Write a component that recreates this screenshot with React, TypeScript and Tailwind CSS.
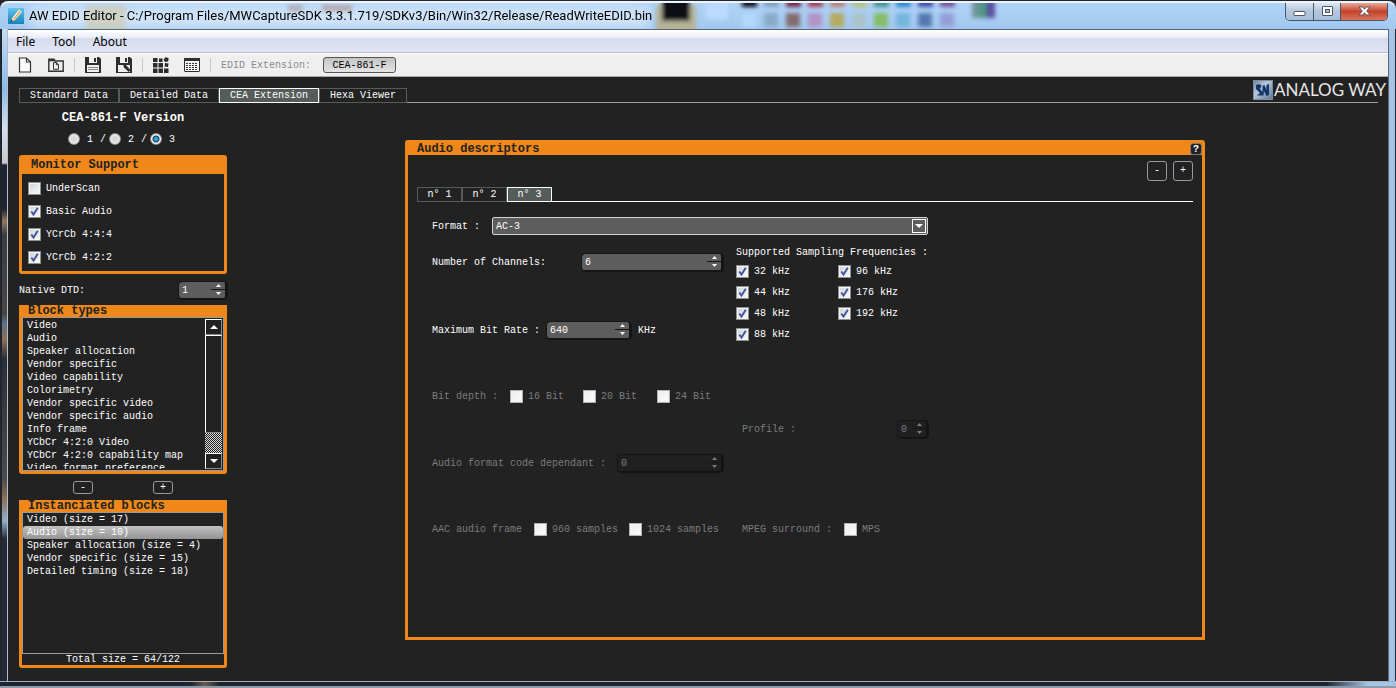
import React, { useState } from "react";

const blockTypes = [
  "Video",
  "Audio",
  "Speaker allocation",
  "Vendor specific",
  "Video capability",
  "Colorimetry",
  "Vendor specific video",
  "Vendor specific audio",
  "Info frame",
  "YCbCr 4:2:0 Video",
  "YCbCr 4:2:0 capability map",
  "Video format preference",
];

const blocks = [
  "Video (size = 17)",
  "Audio (size = 10)",
  "Speaker allocation (size = 4)",
  "Vendor specific (size = 15)",
  "Detailed timing (size = 18)",
];

// Colours of the palette that shines through the glass title bar
const swatches = [
  ["#0b0f1c", "#b4d8fc"],
  ["#7f9fbd", "#8aa9c8"],
  ["#722544", "#836c6e"],
  ["#a63a52", "#b393c4"],
  ["#b98276", "#b5a95c"],
  ["#b5c274", "#a9c3c9"],
  ["#3f9388", "#84bb66"],
  ["#2f88cc", "#74b4de"],
  ["#4048a4", "#5379ae"],
  ["#75509b", "#929fd6"],
];

const TitleBackdrop = () => (
  <svg className="absolute inset-0 h-full w-full" aria-hidden="true">
    <defs>
      <filter id="soft" x="-20%" y="-20%" width="140%" height="140%">
        <feGaussianBlur stdDeviation="2" />
      </filter>
      <filter id="softer" x="-20%" y="-60%" width="140%" height="220%">
        <feGaussianBlur stdDeviation="7" />
      </filter>
    </defs>
    <rect x="30" y="4" width="620" height="21" fill="#e4eefa" opacity="0.75" filter="url(#softer)" />
    <g filter="url(#soft)">
      <rect x="86" y="2" width="40" height="26" fill="#cfc6a8" opacity="0.6" />
      <rect x="288" y="2" width="14" height="6" fill="#9c7a72" opacity="0.5" />
      <rect x="322" y="2" width="30" height="6" fill="#a88478" opacity="0.6" />
      <rect x="656" y="2" width="40" height="28" fill="#b5b297" />
      <rect x="662" y="-4" width="28" height="22" fill="#080b14" />
      <rect x="706" y="0" width="22" height="16" fill="#bcdcff" />
      <rect x="972" y="-4" width="8" height="19" fill="#6f9399" />
      <rect x="979" y="-4" width="8" height="19" fill="#4f9a84" />
      <rect x="986" y="-4" width="9" height="19" fill="#5a4f9f" />
    </g>
    <g filter="url(#soft)">
      {swatches.map(([top, bottom], i) => (
        <g key={top}>
          <rect x={742 + i * 22} y="-6" width="15" height="10" fill={top} />
          <rect x={742 + i * 22} y="10" width="14" height="14" fill={bottom} />
        </g>
      ))}
    </g>
  </svg>
);

const TitleBar = () => (
  <header className="relative flex h-7 items-center justify-between overflow-hidden rounded-t-lg border-t-2 border-white/80 bg-gradient-to-b from-[#b0d3f8] to-[#a2c8ef]">
    <TitleBackdrop />
    <div className="relative flex items-center gap-[5px] pl-2">
      <svg width="16" height="16" viewBox="0 0 16 16" aria-hidden="true">
        <defs>
          <linearGradient id="app" x1="0" y1="0" x2="0" y2="1">
            <stop offset="0" stopColor="#5fc4ee" />
            <stop offset="1" stopColor="#1583b8" />
          </linearGradient>
        </defs>
        <rect width="16" height="16" fill="url(#app)" />
        <path d="M3 14l1.2-4L11 1.5l3 2.2L7 12z" fill="#fdf3dc" />
        <path d="M5.5 11.5L12.5 3" stroke="#e7a04c" strokeWidth="1.2" />
        <path d="M2.5 14.5l1-3 1.8 1.5z" fill="#4a3a2c" />
      </svg>
      <h1 className="whitespace-nowrap font-['Roboto','Noto_Sans',sans-serif] text-[13px] leading-4 text-black">
        AW EDID Editor - C:/Program Files/MWCaptureSDK 3.3.1.719/SDKv3/Bin/Win32/Release/ReadWriteEDID.bin
      </h1>
    </div>
    <div className="relative mr-2 flex h-[18px] self-start overflow-hidden rounded-b-[5px] border border-t-0 border-[#47546b]">
      <button aria-label="Minimize" className="flex w-7 items-center justify-center border-r border-[#47546b] bg-gradient-to-b from-[#dbe6f2] via-[#b3c5da] via-50% to-[#a7bfdc]">
        <svg width="13" height="16" viewBox="0 1 13 16">
          <rect x="1" y="8.5" width="11" height="4" rx="0.5" fill="#fff" stroke="#4f5566" />
        </svg>
      </button>
      <button aria-label="Maximize" className="flex w-[27px] items-center justify-center border-r border-[#47546b] bg-gradient-to-b from-[#dbe6f2] via-[#b3c5da] via-50% to-[#a7bfdc]">
        <svg width="13" height="16" viewBox="0 1 13 16">
          <rect x="1.5" y="3.5" width="10" height="9" rx="0.5" fill="#fff" stroke="#4f5566" />
          <rect x="4.5" y="6.5" width="4" height="3" fill="#a9bdd6" stroke="#4f5566" />
        </svg>
      </button>
      <button aria-label="Close" className="flex w-[46px] items-center justify-center bg-gradient-to-b from-[#e6a898] via-[#c4402a] via-50% to-[#d9775a]">
        <svg width="13" height="16" viewBox="0 1 13 16">
          <path d="M1 4h3.6l1.900 2.200L8.400 4H12L8.700 8l3.300 4H8.400L6.500 9.800 4.600 12H1l3.300-4z" fill="#fff" stroke="#5a4a58" strokeWidth="0.9" />
        </svg>
      </button>
    </div>
  </header>
);

const MenuBar = () => (
  <nav className="flex h-6 items-center gap-[17px] border-t border-b border-t-[#56657a] border-b-[#b6bccc] bg-[linear-gradient(#ffffff,#e8eef6_35%,#d5daee_36%,#e1e5f5)] pt-px pl-2 font-['Noto_Sans','Liberation_Sans',sans-serif] text-[12px] text-black">
    <button>File</button>
    <button>Tool</button>
    <button>About</button>
  </nav>
);

const Separator = () => <span className="mx-[10px] h-[14px] w-px bg-[#c8c8c8]" />;

const ToolBar = () => (
  <div className="flex h-6 items-center border-t border-b border-t-white border-b-[#a8a8a8] bg-[#efefef] pl-[10px]">
    <button aria-label="New" className="mr-[14px]">
      <svg width="16" height="16" viewBox="0 0 16 16" fill="none" stroke="#333" strokeWidth="1.2">
        <path d="M1.500 1H8.500l4 4v10h-11z" fill="#fafafa" />
        <path d="M8.500 1v4h4" />
      </svg>
    </button>
    <button aria-label="Open">
      <svg width="16" height="16" viewBox="0 0 16 16" fill="none" stroke="#333" strokeWidth="1.4">
        <path d="M0.800 14.300V2.200H6l1.200 1.800h8v10.300z" />
        <path d="M0.800 3.600h6" />
        <path d="M5.500 5.500h3l2 2v4.800h-5zM8.300 5.500v2.200h2.200" strokeWidth="1" />
      </svg>
    </button>
    <Separator />
    <button aria-label="Save" className="mr-[15px]">
      <svg width="16" height="16" viewBox="0 0 16 16">
        <path d="M0 0h14l2 2v14H0z" fill="#2e2e2e" />
        <path d="M4 0h8v6H4z" fill="#efefef" />
        <path d="M9 1h2v4H9z" fill="#2e2e2e" />
        <path d="M2 8h12v7H2z" fill="#efefef" />
        <path d="M3 10.500h10M3 12.500h10" stroke="#8a8a8a" />
      </svg>
    </button>
    <button aria-label="Save as">
      <svg width="16" height="16" viewBox="0 0 16 16">
        <path d="M0 0h14l2 2v14H0z" fill="#2e2e2e" />
        <path d="M4 0h8v6H4z" fill="#efefef" />
        <path d="M9 1h2v4H9z" fill="#2e2e2e" />
        <path d="M2 8h12v7H2z" fill="#efefef" />
        <path d="M7 7.500l3 .5 4.500 5-1.800 2L8 10.500z" fill="#2e2e2e" />
      </svg>
    </button>
    <Separator />
    <button aria-label="Blocks" className="mr-[15px]">
      <svg width="16" height="16" viewBox="0 0 16 16" fill="#2b2b2b">
        <path d="M0 1h4.500v4H0zM6 1.500h3.500V5H6zM0 6h4.500v4.500H0zM5.500 6H10v4.500H5.500zM0 11.500h4.500V16H0zM5.500 11.500H10V16H5.500zM11 11.500h4.500V16H11z" />
        <path d="M13 0l2.800 1.500-.8 3-3 .5L10.500 2.500zM12 6l3.500.5-.5 3.500-3.500-.5z" />
      </svg>
    </button>
    <button aria-label="Table">
      <svg width="16" height="16" viewBox="0 0 16 16">
        <rect x="0.5" y="1.5" width="15" height="13" rx="0.5" fill="#fafafa" stroke="#2e2e2e" />
        <path d="M0 1h16v3H0z" fill="#2e2e2e" />
        <path d="M2 6.500h12M2 8.500h12M2 10.500h12M2 12.500h12" stroke="#333" strokeDasharray="2 1" />
      </svg>
    </button>
    <Separator />
    <span className="mr-3 text-[#8a8a8a]">EDID Extension:</span>
    <button className="h-4 w-[73px] rounded-[3px] border border-[#555] bg-gradient-to-b from-[#c4c4c4] to-[#e4e4e4] leading-4 text-black">
      CEA-861-F
    </button>
  </div>
);

const Logo = () => (
  <div className="-mr-2 flex h-[23px] items-center gap-px">
    <svg width="20" height="20" viewBox="0 0 20 20" aria-hidden="true">
      <defs>
        <linearGradient id="steel" x1="0" y1="0" x2="1" y2="1">
          <stop offset="0" stopColor="#6d8199" />
          <stop offset="0.4" stopColor="#b6c8dc" />
          <stop offset="1" stopColor="#5d7590" />
        </linearGradient>
      </defs>
      <rect x="0.5" y="0.5" width="19" height="19" fill="url(#steel)" stroke="#7d8c9c" />
      <path d="M3 5c2.500-1.500 5-1 5.500 1L7 9l2.500 3V6l2-1 2 5V5L16 4v11l-2.500 1-2.500-5-.5 4.500L4 15.500 7 13 3 9z" fill="#15366a" />
    </svg>
    <span className="whitespace-nowrap font-['Lato','Liberation_Sans',sans-serif] text-[17px] leading-5 text-[#e6e6e6]">ANALOG WAY</span>
  </div>
);

const Check = ({ label, checked = false, disabled = false, className = "" }: { label: string; checked?: boolean; disabled?: boolean; className?: string }) => (
  <label className={"flex items-center gap-[5px] whitespace-nowrap " + (disabled ? "text-[#7c7c7c] " : "") + className}>
    <span className="grid shrink-0">
      <input
        type="checkbox"
        defaultChecked={checked}
        disabled={disabled}
        className="peer h-[13px] w-[13px] appearance-none border border-[#8e8f8f] bg-gradient-to-br from-[#cfd3da] to-[#fbfbfb] shadow-[inset_0_0_0_1px_#f4f4f4] [grid-area:1/1] disabled:border-[#b1b1b1] disabled:from-[#ececec] disabled:to-[#fcfcfc]"
      />
      <svg width="13" height="13" viewBox="0 0 13 13" className="pointer-events-none hidden [grid-area:1/1] peer-checked:block">
        <path d="M3.300 6.500l2.200 3L9.800 2.800" fill="none" stroke="#3f549b" strokeWidth="1.9" />
      </svg>
    </span>
    {label}
  </label>
);

const Spin = ({ id, value, disabled = false, className }: { id: string; value: string; disabled?: boolean; className: string }) => (
  <span className={"flex h-[17px] shrink-0 rounded-[3px] border-r-2 border-b border-[#131313] outline outline-[#151515] " + (disabled ? "bg-[#202020] text-[#7c7c7c] " : "bg-[#5d5d5d] text-white ") + className}>
    <input id={id} defaultValue={value} disabled={disabled} className="min-w-0 flex-1 bg-transparent pt-[2px] pl-[3px] outline-none" />
    <span className="flex w-[14px] shrink-0 flex-col">
      <button aria-label="Increase" disabled={disabled} className="flex h-2 items-center justify-center border-b border-[#161616] pt-px">
        <svg width="5" height="3" viewBox="0 0 5 3"><path d="M0 3L2.500 0 5 3z" fill="currentColor" /></svg>
      </button>
      <button aria-label="Decrease" disabled={disabled} className="flex h-2 items-center justify-center">
        <svg width="5" height="3" viewBox="0 0 5 3"><path d="M0 0h5L2.500 3z" fill="currentColor" /></svg>
      </button>
    </span>
  </span>
);

const ScrollBar = () => (
  <div className="flex w-[17px] shrink-0 flex-col bg-[repeating-conic-gradient(#d8d8d8_0_25%,#222_0_50%)] bg-[length:2px_2px]">
    <button aria-label="Scroll up" className="flex h-4 items-center justify-center border border-white border-r-[#8a8a8a] border-b-[#8a8a8a] bg-[#222]">
      <svg width="8" height="4" viewBox="0 0 8 4"><path d="M0 4l4-4 4 4z" fill="#fff" /></svg>
    </button>
    <div className="flex-1 border border-white border-r-[#8a8a8a] border-b-[#8a8a8a] bg-[#222]" />
    <button aria-label="Scroll down" className="mt-5 flex h-4 items-center justify-center border border-white border-r-[#8a8a8a] border-b-[#8a8a8a] bg-[#222]">
      <svg width="8" height="4" viewBox="0 0 8 4"><path d="M0 0h8L4 4z" fill="#fff" /></svg>
    </button>
  </div>
);

const Sidebar = () => {
  const [selected, setSelected] = useState("Audio (size = 10)");

  return (
    <aside className="flex w-[208px] shrink-0 flex-col pt-1">
      <h2 className="h-5 text-center text-[12px] leading-[22px] font-bold">CEA-861-F Version</h2>
      <div role="radiogroup" aria-label="CEA-861-F Version" className="mt-[2px] mb-[6px] flex h-5 items-center gap-[3px] pl-[49px]">
        {["1", "2", "3"].map((v) => (
          <React.Fragment key={v}>
            <label className="flex items-center gap-[7px]">
              <input
                type="radio"
                name="version"
                defaultChecked={v === "3"}
                className="h-3 w-3 appearance-none rounded-full border border-[#8e8f8f] bg-[radial-gradient(circle,#d0d0d0,#f4f4f4)] checked:bg-[radial-gradient(circle,#3cb4e8_0_1px,#12466e_3px,#f4f4f4_4px)]"
              />
              {v}
            </label>
            {v !== "3" && <span className="pl-1">/</span>}
          </React.Fragment>
        ))}
      </div>

      <section className="rounded-[3px] border-[3px] border-[#ef8719]">
        <h2 className="h-4 bg-[#ef8719] pl-[9px] text-[12px] leading-[14px] font-bold text-[#222]">Monitor Support</h2>
        <div className="flex flex-col pt-[3px] pb-[2px] pl-[6px]">
          <Check label="UnderScan" className="h-[23px]" />
          <Check label="Basic Audio" checked className="h-[23px]" />
          <Check label="YCrCb 4:4:4" checked className="h-[23px]" />
          <Check label="YCrCb 4:2:2" checked className="h-[23px]" />
        </div>
      </section>

      <div className="flex h-[31px] items-center justify-between pt-px">
        <label htmlFor="dtd">Native DTD:</label>
        <Spin id="dtd" value="1" className="w-12" />
      </div>

      <section className="rounded-b-[3px] border-[3px] border-[#ef8719]">
        <h2 className="h-[9px] bg-[#ef8719] pl-[6px] text-[12px] leading-[6px] font-bold text-[#222]">Block types</h2>
        <div className="flex h-[154px] border border-[#9a9a9a] p-px">
          <ul role="listbox" aria-label="Block types" className="flex-1 overflow-hidden pl-[3px]">
            {blockTypes.map((name) => (
              <li key={name} role="option" aria-selected={false} className="leading-[13px] whitespace-nowrap">
                {name}
              </li>
            ))}
          </ul>
          <ScrollBar />
        </div>
      </section>

      <div className="flex h-[26px] items-center justify-between px-[54px]">
        <button aria-label="Remove block" className="h-[13px] w-5 rounded-[3px] border border-[#9a9a9a] leading-[9px]">-</button>
        <button aria-label="Add block" className="h-[13px] w-5 rounded-[3px] border border-[#9a9a9a] leading-[9px]">+</button>
      </div>

      <section className="rounded-b-[3px] border-[3px] border-[#ef8719]">
        <h2 className="h-[9px] bg-[#ef8719] pl-[6px] text-[12px] leading-[6px] font-bold text-[#222]">Instanciated blocks</h2>
        <ul role="listbox" aria-label="Instanciated blocks" className="h-[142px] border border-[#9a9a9a]">
          {blocks.map((name) => (
            <li
              key={name}
              role="option"
              aria-selected={name === selected}
              onClick={() => setSelected(name)}
              className="rounded-[3px] pl-1 leading-[13px] aria-selected:bg-gradient-to-b aria-selected:from-[#c2c2c2] aria-selected:to-[#949494]"
            >
              {name}
            </li>
          ))}
        </ul>
        <p className="text-center leading-[11px]">Total size = 64/122</p>
      </section>
    </aside>
  );
};

const AudioPanel = () => (
  <section className="mt-[37px] w-full max-w-[800px] rounded-t-[3px] border-[3px] border-[#ef8719]">
    <div className="flex h-3 items-center justify-between bg-[#ef8719] pl-[9px]">
      <h2 className="text-[12px] leading-3 font-bold text-[#222]">Audio descriptors</h2>
      <button aria-label="Help" className="h-3 w-3 rounded-[3px] border border-[#777] bg-[#222] leading-[9px] font-bold">?</button>
    </div>
    <div className="px-[9px] pb-[98px]">
      <div className="flex justify-end gap-[6px] py-[6px]">
        <button aria-label="Remove descriptor" className="h-5 w-5 rounded-[3px] border border-[#9a9a9a] leading-4">-</button>
        <button aria-label="Add descriptor" className="h-5 w-5 rounded-[3px] border border-[#9a9a9a] leading-4">+</button>
      </div>
      <div role="tablist" className="flex h-[15px]">
        <button role="tab" className="w-[45px] border border-[#565c5a] leading-3">n° 1</button>
        <button role="tab" className="w-[45px] border border-[#565c5a] leading-3">n° 2</button>
        <button role="tab" aria-selected className="w-[45px] border border-white bg-[#565c5a] leading-3">n° 3</button>
        <span className="flex-1 border-b border-white" />
      </div>

      <form className="pl-[15px]">
        <div className="mt-[14px] flex h-5 items-center">
          <label htmlFor="format" className="w-[60px]">Format :</label>
          <div className="relative w-[436px]">
            <select id="format" className="block h-[18px] w-full appearance-none rounded-[2px] border border-[#d4d4d4] bg-[#5d5d5d] pl-[3px] text-white">
              <option>AC-3</option>
            </select>
            <span className="pointer-events-none absolute inset-y-[2px] right-[2px] flex w-[14px] items-center justify-center border border-white bg-[#5d5d5d]">
              <svg width="8" height="4" viewBox="0 0 8 4"><path d="M0 0h8L4 4z" fill="#fff" /></svg>
            </span>
          </div>
        </div>

        <div className="mt-2 flex">
          <div className="w-[304px] pt-2">
            <div className="flex h-5 items-center">
              <label htmlFor="channels" className="w-[150px]">Number of Channels:</label>
              <Spin id="channels" value="6" className="w-[141px]" />
            </div>
            <div className="mt-12 flex h-5 items-center">
              <label htmlFor="rate" className="w-[115px]">Maximum Bit Rate :</label>
              <Spin id="rate" value="640" className="w-[84px]" />
              <span className="pl-[7px]">KHz</span>
            </div>
          </div>
          <fieldset>
            <legend className="h-[17px] leading-[18px]">Supported Sampling Frequencies :</legend>
            <div className="grid grid-flow-col grid-cols-[102px_auto] grid-rows-4">
              <Check label="32 kHz" checked className="h-[21px]" />
              <Check label="44 kHz" checked className="h-[21px]" />
              <Check label="48 kHz" checked className="h-[21px]" />
              <Check label="88 kHz" checked className="h-[21px]" />
              <Check label="96 kHz" checked className="h-[21px]" />
              <Check label="176 kHz" checked className="h-[21px]" />
              <Check label="192 kHz" checked className="h-[21px]" />
            </div>
          </fieldset>
        </div>

        <div className="mt-[41px] flex h-5 items-center">
          <span className="w-[78px] text-[#7c7c7c]">Bit depth :</span>
          <Check label="16 Bit" disabled className="w-[73px]" />
          <Check label="20 Bit" disabled className="w-[74px]" />
          <Check label="24 Bit" disabled />
        </div>
        <div className="mt-[13px] flex h-5 items-center pl-[310px]">
          <label htmlFor="profile" className="w-[156px] text-[#7c7c7c]">Profile :</label>
          <Spin id="profile" value="0" disabled className="w-[30px]" />
        </div>
        <div className="mt-[14px] flex h-5 items-center">
          <label htmlFor="dependant" className="w-[186px] text-[#7c7c7c]">Audio format code dependant :</label>
          <Spin id="dependant" value="0" disabled className="w-[105px]" />
        </div>
        <div className="mt-[46px] flex h-5 items-center">
          <span className="w-[102px] text-[#7c7c7c]">AAC audio frame</span>
          <Check label="960 samples" disabled className="w-[95px]" />
          <Check label="1024 samples" disabled className="w-[113px]" />
          <span className="w-[102px] text-[#7c7c7c]">MPEG surround :</span>
          <Check label="MPS" disabled />
        </div>
      </form>
    </div>
  </section>
);

const App = () => {
  return (
    <div className="flex min-h-screen flex-col border-t border-[#22242e] bg-[#22242e] font-['Liberation_Mono','Courier_New',monospace] text-[10px] text-white">
      <TitleBar />
      <div className="flex flex-1">
        <div className="w-2 shrink-0 border-r border-l-2 border-r-[#b4bccb] border-l-[#22242e] bg-[linear-gradient(#c3dbf5,#8bbce6_60px,#d5dfee_100px,#c9c9cc_134px,#1c2530_136px,#1c2530_180px,#98765a_192px,#3a3c42_206px,#4a4645_285px,#58708a_294px,#8d7156_310px,#2a2e36_330px,#4c4c4e_450px,#8d7156_470px,#8fb0cc_492px,#222b36_510px)]" />
        <div className="flex min-w-0 flex-1 flex-col bg-[#222]">
          <MenuBar />
          <ToolBar />
          <main className="flex-1 pr-[10px] pb-3 pl-[11px]">
            <div className="flex h-[26px] items-end">
              <div role="tablist" className="flex h-[15px]">
                <button role="tab" className="w-[100px] border border-[#565c5a] leading-3">Standard Data</button>
                <button role="tab" className="w-[100px] border border-[#565c5a] leading-3">Detailed Data</button>
                <button role="tab" aria-selected className="w-[100px] border border-white bg-[#565c5a] leading-3">CEA Extension</button>
                <button role="tab" className="w-[88px] border border-[#565c5a] leading-3">Hexa Viewer</button>
              </div>
              <div className="flex flex-1 justify-end self-stretch border-b border-[#a0a0a0] pt-px">
                <Logo />
              </div>
            </div>
            <div className="flex gap-[5px]">
              <Sidebar />
              <div className="flex min-w-0 flex-1 items-start justify-center">
                <AudioPanel />
              </div>
            </div>
          </main>
        </div>
        <div className="w-2 shrink-0 border-r border-l border-r-[#22242e] border-l-[#56657a] bg-[#a5c5e8]" />
      </div>
      <div className="h-[7px] border-t border-b-2 border-t-[#a4acb8] border-b-[#8f9aa8] bg-[linear-gradient(90deg,#1c2530_0,#1c2530_190px,#6a5a50_205px,#1c2530_220px,#1c2530_95%,#a5c5e8_98%)]" />
    </div>
  );
};

export default App;
